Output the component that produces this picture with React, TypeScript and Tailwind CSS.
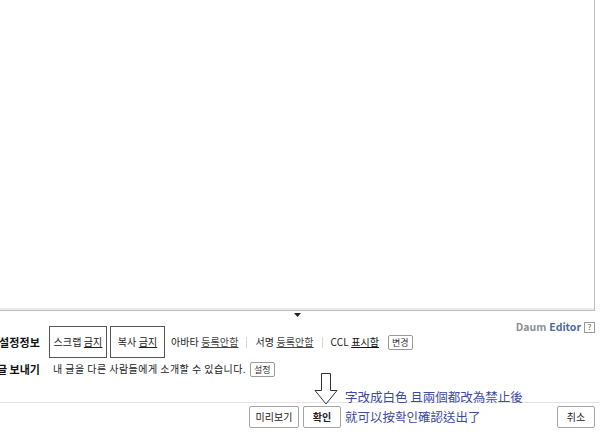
import React from "react";

const kr = { fontFamily: '"Noto Sans CJK KR", "Noto Sans", sans-serif' };

function SmallBtn({ label }: { label: string }) {
  return (
    <span className="inline-flex items-center justify-center h-[15px] px-[3px] border border-[#9a9a9a] rounded-[2px] bg-white text-[9px] leading-none text-[#333] tracking-normal">
      {label}
    </span>
  );
}

function Sep() {
  return <span className="mx-[8px] h-[11px] w-px bg-[#d8d8d8]" />;
}

export default function App() {
  return (
    <div className="relative w-[600px] h-[436px] bg-white overflow-hidden text-[#222]" style={kr}>
      {/* editor area */}
      <div className="w-[595px] h-[311px] border-r border-b border-[#bdbdbd] shadow-[0_-2px_0_#ececec_inset]" />
      {/* resize handle */}
      <div className="flex justify-center w-[595px] h-[6px]">
        <svg width="7" height="4" viewBox="0 0 7 4" className="mt-[2px]">
          <path d="M0 0h7L3.5 4z" fill="#222" />
        </svg>
      </div>

      {/* settings row */}
      <div className="flex items-center h-[32px] mt-[9px] text-[10px] leading-none tracking-[0.1px]">
        <span className="w-[50px] -ml-[1px] font-bold text-[#111] text-[11px]">설정정보</span>
        <span className="flex items-center justify-center w-[58px] h-[32px] border border-[#555] text-[#222]">
          스크랩&nbsp;<span className="underline">금지</span>
        </span>
        <span className="ml-[3px] flex items-center justify-center w-[55px] h-[32px] border border-[#555] text-[#222]">
          복사&nbsp;<span className="underline">금지</span>
        </span>
        <span className="ml-[6px]">아바타 <span className="underline text-[#444]">등록안함</span></span>
        <Sep />
        <span>서명 <span className="underline text-[#444]">등록안함</span></span>
        <Sep />
        <span>CCL <span className="underline text-[#111]">표시함</span></span>
        <span className="ml-[9px]"><SmallBtn label="변경" /></span>

        {/* daum editor label */}
        <div className="ml-auto self-start -mt-[5px] mr-[5px] flex items-center h-[12px] text-[10.5px] font-bold leading-none tracking-normal">
          <span className="text-[#8a8f99]">Daum</span>
          <span className="ml-[3px] text-[#4a6a9e]">Editor</span>
          <span className="ml-[3px] flex items-center justify-center w-[11px] h-[11px] border border-[#999] text-[8px] text-[#555] font-normal">?</span>
        </div>
      </div>

      {/* send row */}
      <div className="flex items-center h-[16px] mt-[3px] text-[10px] leading-none">
        <span className="w-[54px] -ml-[3px] font-bold text-[#111] text-[11px]">글 보내기</span>
        <span className="ml-[2px] tracking-[0.45px]">내 글을 다른 사람들에게 소개할 수 있습니다.</span>
        <span className="ml-[4px]"><SmallBtn label="설정" /></span>
      </div>

      {/* divider */}
      <div className="mt-[25px] h-px w-full bg-[#e3e3e3]" />

      {/* buttons */}
      <div className="flex items-center h-[22px] mt-[3px] text-[10px] leading-none">
        <span className="ml-[249px] flex items-center justify-center w-[50px] h-[22px] border border-[#a5a5a5] rounded-[2px] bg-white">미리보기</span>
        <span className="ml-[4px] flex items-center justify-center w-[38px] h-[22px] border border-[#a5a5a5] rounded-[2px] bg-white font-bold">확인</span>
        <span className="ml-auto mr-[5px] flex items-center justify-center w-[38px] h-[22px] border border-[#a5a5a5] rounded-[2px] bg-white">취소</span>
      </div>

      {/* annotation arrow */}
      <svg className="absolute left-[314px] top-[373px]" width="24" height="32" viewBox="0 0 24 32">
        <path d="M7.5 0.5h9v17h6.5L12 31 1 17.5h6.5z" fill="white" stroke="#333" strokeWidth="1" />
      </svg>
      {/* annotation text */}
      <div
        className="absolute left-[345px] top-[387px] text-[12.5px] leading-[20px] text-[#3b4b9e]"
        style={{ fontFamily: '"Noto Sans CJK TC", "Noto Sans CJK KR", sans-serif' }}
      >
        <div>字改成白色 且兩個都改為禁止後</div>
        <div>就可以按확인確認送出了</div>
      </div>
    </div>
  );
}
